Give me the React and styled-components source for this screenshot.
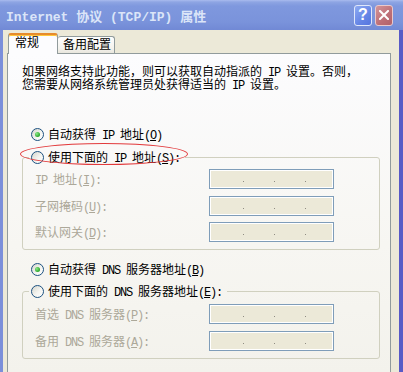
import React from 'react'
import styled, { createGlobalStyle } from 'styled-components'

const GlobalStyle = createGlobalStyle`
  html, body { margin: 0; padding: 0; background: #ece9d8; }
  body {
    font-family: "Liberation Mono", "Noto Sans CJK SC", monospace;
    font-size: 12px;
    color: #000;
  }
`

const Window = styled.div`
  width: 403px;
  height: 372px;
  overflow: hidden;
  display: flex;
  flex-direction: column;
  background: #ece9d8;
`

const TitleBar = styled.div`
  height: 30px;
  flex: none;
  display: flex;
  align-items: center;
  box-sizing: border-box;
  padding: 0 10px 0 6px;
  background: linear-gradient(#a9bbee 0, #8ea5e3 2px, #7f98de 6px, #7a93db 22px, #7189d5 30px);
`

const Title = styled.div`
  flex: 1;
  color: #dbe5f8;
  font-weight: bold;
  font-size: 13px;
  white-space: pre;
`

const CapButton = styled.div`
  width: 18px;
  height: 21px;
  box-sizing: border-box;
  border: 1px solid ${p => (p.$close ? '#e9c9cc' : '#dfe7fb')};
  border-radius: 3px;
  display: flex;
  align-items: center;
  justify-content: center;
  color: #fff;
  font-family: "Liberation Sans", sans-serif;
  font-weight: bold;
  font-size: 16px;
  background: ${p =>
    p.$close
      ? 'linear-gradient(135deg, #d3959a, #bd6e76 60%, #b1616a)'
      : 'linear-gradient(135deg, #8eaaf2, #6585e6 60%, #5676de)'};
  & + & { margin-left: 3px; }
`

const Body = styled.div`
  flex: 1;
  min-height: 0;
  display: flex;
  flex-direction: column;
  border-left: 3px solid #7b8fda;
  border-right: 4px solid #585ac6;
  padding: 3px 8px 0 4px;
`

const Tabs = styled.div`
  display: flex;
  align-items: flex-end;
  padding-left: 1px;
  position: relative;
  z-index: 1;
`

const Tab = styled.div`
  box-sizing: border-box;
  border: 1px solid #919b9c;
  border-radius: 3px 3px 0 0;
  white-space: nowrap;
  ${p =>
    p.$active
      ? `
    width: 50px;
    height: 21px;
    margin-bottom: -1px;
    border-top: 2px solid #e68b2c;
    border-bottom: none;
    box-shadow: inset 0 1px 0 #ffc73c;
    background: #fcfcfe;
    padding: 2px 0 0 6px;
    line-height: 14px;
  `
      : `
    width: 57px;
    height: 17px;
    border-bottom: none;
    border-left: none;
    background: linear-gradient(#fefefe, #f4f3ee 70%, #e8e6dd);
    padding: 2px 0 0 5px;
    line-height: 14px;
  `}
`

const Panel = styled.div`
  flex: 1;
  position: relative;
  border: 1px solid #919b9c;
  border-bottom: none;
  background: linear-gradient(#fcfcfe, #f7f6f2 60%, #f3f2ec);
  padding: 13px 10px 0 14px;
`

const Intro = styled.p`
  margin: 0;
  line-height: 13px;
  white-space: nowrap;
`

const Latin = styled.span`
  letter-spacing: -1.2px;
`

const Option = styled.span`
  display: flex;
  align-items: center;
  gap: 4px;
  height: 16px;
  white-space: nowrap;
`

const Standalone = styled(Option)`
  margin: ${p => p.$top}px 0 0 9px;
`

const Radio = styled.span`
  flex: none;
  width: 13px;
  height: 13px;
  box-sizing: border-box;
  border-radius: 50%;
  border: 1px solid #1c5180;
  background: linear-gradient(135deg, #d6d5cc, #f4f4f0 55%, #ffffff);
  display: flex;
  align-items: center;
  justify-content: center;
  &::after {
    content: '';
    width: 5px;
    height: 5px;
    border-radius: 50%;
    background: ${p => (p.$on ? 'radial-gradient(circle at 35% 35%, #8be987, #2aa52a 70%)' : 'transparent')};
  }
`

const Group = styled.fieldset`
  margin: ${p => p.$top}px 0 0;
  padding: 0;
  min-width: 0;
  border: 1px solid #d0d0bf;
  border-radius: 3px;
`

const Legend = styled.legend`
  margin-left: 6px;
  padding: 0 5px 0 2px;
`

const Fields = styled.div`
  display: grid;
  grid-template-columns: 174px 125px;
  row-gap: 6.5px;
  align-items: center;
  padding: ${p => p.$top}px 0 ${p => p.$bottom}px 12px;
`

const Label = styled.span`
  color: #aca899;
  white-space: nowrap;
`

const IpBox = styled.div`
  height: 20px;
  box-sizing: border-box;
  border: 1px solid #7f9db9;
  box-shadow: inset 0 0 0 1px #ffffff;
  background: #ece9d8;
  display: flex;
  align-items: flex-start;
  gap: 30px;
  padding: 11px 0 0 33px;
`

const Dot = styled.span`
  width: 1px;
  height: 1px;
  background: #8f8c82;
`

const Mark = styled.div`
  position: absolute;
  left: 12px;
  top: 89px;
  width: 168px;
  height: 22px;
  box-sizing: border-box;
  border: 1px solid #e23a3c;
  border-radius: 50%;
  pointer-events: none;
`

// SimSun-like text: ASCII runs are squeezed to half-width, accelerator underlined
const Txt = ({ s, acc, colon }) => {
  const parts = s.split(/([\x20-\x7e]+)/).filter(Boolean)
  return (
    <>
      {parts.map((p, i) => (/^[\x20-\x7e]+$/.test(p) ? <Latin key={i}>{p}</Latin> : p))}
      {acc && (
        <Latin>
          (<u>{acc}</u>){colon ? ':' : ''}
        </Latin>
      )}
    </>
  )
}

const Ip = () => (
  <IpBox>
    <Dot />
    <Dot />
    <Dot />
  </IpBox>
)

const Field = ({ s, acc }) => (
  <>
    <Label>
      <Txt s={s} acc={acc} colon />
    </Label>
    <Ip />
  </>
)

const App = () => {
  return (
    <Window>
      <GlobalStyle />
      <TitleBar>
        <Title>Internet 协议 (TCP/IP) 属性</Title>
        <CapButton>?</CapButton>
        <CapButton $close>
          <svg width="10" height="10" viewBox="0 0 10 10">
            <path d="M1 1L9 9M9 1L1 9" stroke="#fff" strokeWidth="2" strokeLinecap="square" />
          </svg>
        </CapButton>
      </TitleBar>
      <Body>
        <Tabs>
          <Tab $active>常规</Tab>
          <Tab>备用配置</Tab>
        </Tabs>
        <Panel>
          <Intro>
            <Txt s="如果网络支持此功能，则可以获取自动指派的 IP 设置。否则，" />
            <br />
            <Txt s="您需要从网络系统管理员处获得适当的 IP 设置。" />
          </Intro>

          <Standalone $top={33}>
            <Radio $on />
            <span><Txt s="自动获得 IP 地址" acc="O" /></span>
          </Standalone>
          <Group $top={7}>
            <Legend>
              <Option>
                <Radio />
                <span><Txt s="使用下面的 IP 地址" acc="S" colon /></span>
              </Option>
            </Legend>
            <Fields $top={4} $bottom={7}>
              <Field s="IP 地址" acc="I" />
              <Field s="子网掩码" acc="U" />
              <Field s="默认网关" acc="D" />
            </Fields>
          </Group>

          <Standalone $top={11}>
            <Radio $on />
            <span><Txt s="自动获得 DNS 服务器地址" acc="B" /></span>
          </Standalone>
          <Group $top={6}>
            <Legend>
              <Option>
                <Radio />
                <span><Txt s="使用下面的 DNS 服务器地址" acc="E" colon /></span>
              </Option>
            </Legend>
            <Fields $top={5} $bottom={7.5}>
              <Field s="首选 DNS 服务器" acc="P" />
              <Field s="备用 DNS 服务器" acc="A" />
            </Fields>
          </Group>
          <Mark />
        </Panel>
      </Body>
    </Window>
  )
}

export default App
